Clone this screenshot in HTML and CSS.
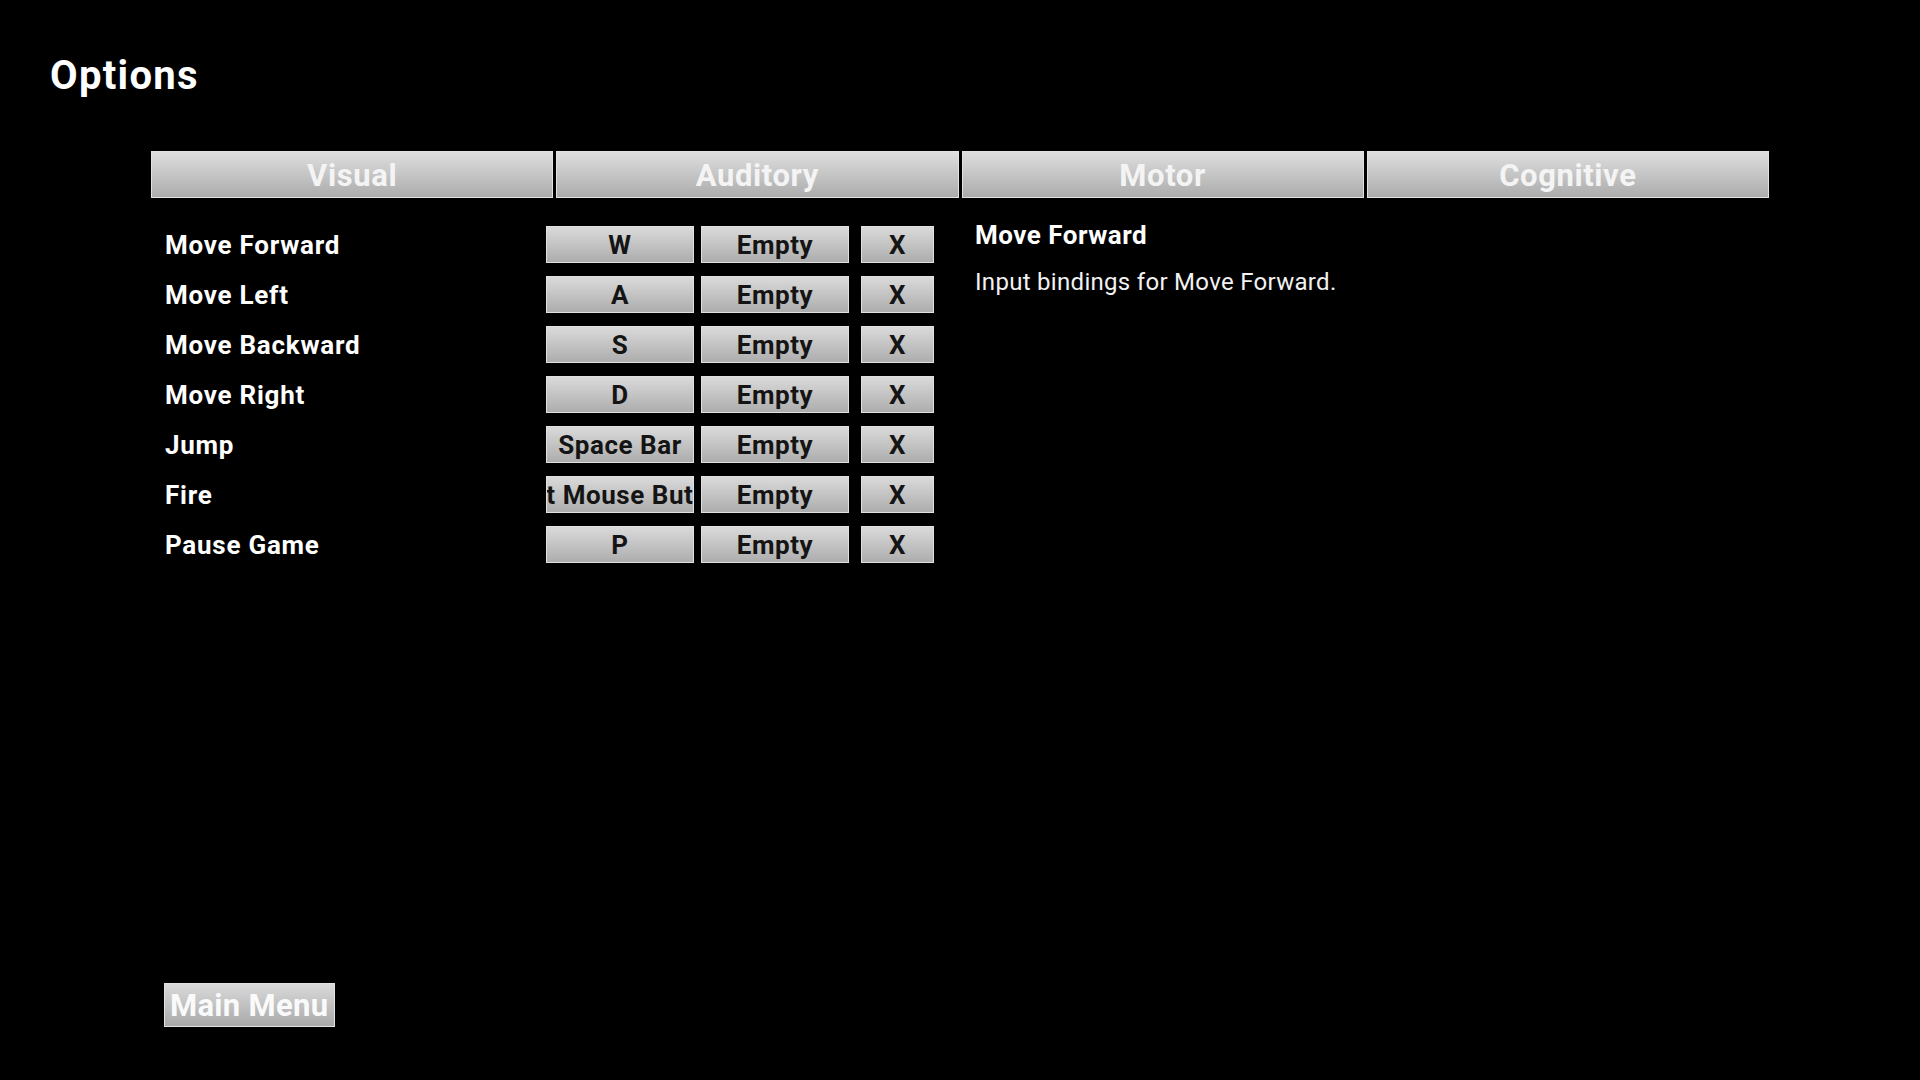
FILE: index.html
```html
<!DOCTYPE html>
<html lang="en">
<head>
<meta charset="utf-8">
<title>Options</title>
<link rel="stylesheet" href="styles.css">
</head>
<body>
<div class="page">
  <h1 class="title">Options</h1>
  <nav class="tabs">
    <div class="tab">Visual</div>
    <div class="tab">Auditory</div>
    <div class="tab">Motor</div>
    <div class="tab">Cognitive</div>
  </nav>
  <div class="content">
    <div class="rows">
      <div class="row"><span class="label">Move Forward</span><div class="btn key">W</div><div class="btn key">Empty</div><div class="btn clear">X</div></div>
      <div class="row"><span class="label">Move Left</span><div class="btn key">A</div><div class="btn key">Empty</div><div class="btn clear">X</div></div>
      <div class="row"><span class="label">Move Backward</span><div class="btn key">S</div><div class="btn key">Empty</div><div class="btn clear">X</div></div>
      <div class="row"><span class="label">Move Right</span><div class="btn key">D</div><div class="btn key">Empty</div><div class="btn clear">X</div></div>
      <div class="row"><span class="label">Jump</span><div class="btn key">Space Bar</div><div class="btn key">Empty</div><div class="btn clear">X</div></div>
      <div class="row"><span class="label">Fire</span><div class="btn key"><span>Left Mouse Button</span></div><div class="btn key">Empty</div><div class="btn clear">X</div></div>
      <div class="row"><span class="label">Pause Game</span><div class="btn key">P</div><div class="btn key">Empty</div><div class="btn clear">X</div></div>
    </div>
    <div class="desc">
      <div class="desc-title">Move Forward</div>
      <div class="desc-text">Input bindings for Move Forward.</div>
    </div>
  </div>
  <div class="spacer"></div>
  <div class="footer">
    <div class="main-menu">Main Menu</div>
  </div>
</div>
</body>
</html>
```

FILE: styles.css
```css
html, body {
  margin: 0;
  padding: 0;
  background: #000;
}
body {
  font-family: Roboto, "Liberation Sans", sans-serif;
  color: #fff;
}
.page {
  height: 1080px;
  display: flex;
  flex-direction: column;
  box-sizing: border-box;
  padding-top: 52px;
}
.title {
  margin: 0 0 51px 50px;
  font-size: 40px;
  line-height: 48px;
  font-weight: 700;
  letter-spacing: 1.3px;
  color: #fff;
}
.tabs {
  display: flex;
  gap: 3px;
  width: 1618px;
  margin: 0 auto;
}
.tab {
  flex: 1;
  height: 47px;
  box-sizing: border-box;
  padding-top: 1px;
  border: 1px solid #e2e2e2;
  background: linear-gradient(#dedede, #acacac);
  display: flex;
  align-items: center;
  justify-content: center;
  font-size: 31px;
  font-weight: 700;
  letter-spacing: 0.6px;
  color: #f4f4f4;
}
.content {
  display: flex;
  margin: 22px 0 0 164px;
}
.rows {
  display: flex;
  flex-direction: column;
  gap: 13px;
  padding-top: 6px;
}
.row {
  display: flex;
  align-items: center;
  height: 37px;
}
.label {
  width: 381px;
  padding-left: 1px;
  font-size: 26px;
  font-weight: 700;
  letter-spacing: 0.75px;
  color: #fff;
}
.btn {
  height: 37px;
  box-sizing: border-box;
  border: 1px solid #e0e0e0;
  background: linear-gradient(#dadada, #adadad);
  display: flex;
  align-items: center;
  justify-content: center;
  overflow: hidden;
  white-space: nowrap;
  font-size: 26px;
  font-weight: 700;
  letter-spacing: 0.55px;
  color: #141414;
}
.btn span {
  flex: none;
}
.key {
  width: 148px;
  margin-right: 7px;
}
.key + .key {
  margin-right: 12px;
}
.clear {
  width: 73px;
}
.desc {
  margin-left: 40px;
  padding-left: 1px;
}
.desc-title {
  font-size: 26px;
  line-height: 30px;
  font-weight: 700;
  letter-spacing: 0.5px;
}
.desc-text {
  margin-top: 17px;
  font-size: 24px;
  line-height: 30px;
  font-weight: 400;
  letter-spacing: 0.3px;
  color: #f2f2f2;
}
.spacer {
  flex: 1;
}
.footer {
  padding: 0 0 53px 164px;
}
.main-menu {
  display: inline-flex;
  align-items: center;
  height: 44px;
  box-sizing: border-box;
  padding: 0 6px 0 5px;
  border: 1px solid #e2e2e2;
  background: linear-gradient(#dadada, #a9a9a9);
  font-size: 31px;
  font-weight: 700;
  letter-spacing: 0.3px;
  color: #fafafa;
}
```
